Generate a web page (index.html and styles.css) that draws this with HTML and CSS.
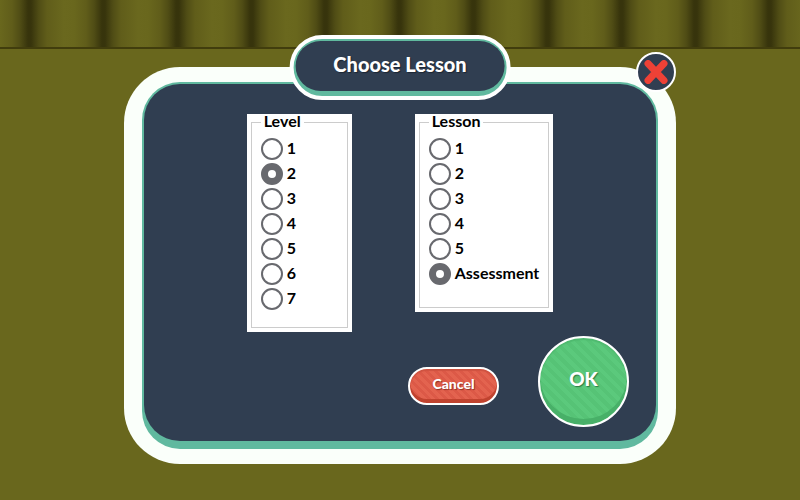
FILE: index.html
```html
<!DOCTYPE html>
<html lang="en">
<head>
<meta charset="utf-8">
<title>Choose Lesson</title>
<link rel="stylesheet" href="styles.css">
</head>
<body>
<div class="curtain"></div>
<main class="dialog" role="dialog" aria-labelledby="dialog-title">
  <h1 class="title" id="dialog-title"><span class="title-face">Choose Lesson</span></h1>
  <button class="close" type="button" aria-label="Close">
    <svg viewBox="0 0 24 24" width="24" height="24"><path d="M4 3.5 20 20.5M20 3.5 4 20.5" fill="none" stroke="#ee4136" stroke-width="7" stroke-linecap="round"/></svg>
  </button>
  <div class="rim">
    <form class="content">
      <div class="choices">
        <div class="card">
          <fieldset class="group level">
            <legend>Level</legend>
            <label><input type="radio" name="level">1</label>
            <label><input type="radio" name="level" checked>2</label>
            <label><input type="radio" name="level">3</label>
            <label><input type="radio" name="level">4</label>
            <label><input type="radio" name="level">5</label>
            <label><input type="radio" name="level">6</label>
            <label><input type="radio" name="level">7</label>
          </fieldset>
        </div>
        <div class="card">
          <fieldset class="group lesson">
            <legend>Lesson</legend>
            <label><input type="radio" name="lesson">1</label>
            <label><input type="radio" name="lesson">2</label>
            <label><input type="radio" name="lesson">3</label>
            <label><input type="radio" name="lesson">4</label>
            <label><input type="radio" name="lesson">5</label>
            <label><input type="radio" name="lesson" checked>Assessment</label>
          </fieldset>
        </div>
      </div>
      <div class="actions">
        <button class="cancel" type="button">Cancel</button>
        <button class="ok" type="button">OK</button>
      </div>
    </form>
  </div>
</main>
</body>
</html>
```
FILE: styles.css
```css
* {
  box-sizing: border-box;
}

body {
  margin: 0;
  min-height: 100vh;
  background: #69671d;
  font-family: Lato, "Open Sans", sans-serif;
}

.curtain {
  height: 49px;
  border-bottom: 2px solid #413d0d;
  background: repeating-linear-gradient(90deg, #69671d 0, #605d1a 12px, #504d15 20px, #37340c 28px, #37340c 31px, #504d15 39px, #605d1a 47px, #6a681e 64px, #69671d 74px);
}

.dialog {
  position: relative;
  width: 69%;
  min-width: 480px;
  margin: 18px auto 36px;
  padding: 15px 18px;
  border-radius: 56px;
  background: #fafffa;
}

.rim {
  padding: 2px 2px 8px;
  border-radius: 38px;
  background: #60b99f;
}

.content {
  padding: 30px 27px 14px;
  border-radius: 36px;
  background: #303e51;
}

.title {
  position: absolute;
  top: -32px;
  left: 50%;
  width: 40%;
  margin: 0;
  padding: 2px 2px 5px;
  border: 4px solid #fff;
  border-radius: 33px;
  background: #60b99f;
  transform: translateX(-50%);
}

.title-face {
  display: block;
  padding-bottom: 3px;
  border-radius: 26px;
  background: #303e51;
  color: #fff;
  font-size: 20px;
  font-weight: 900;
  line-height: 47px;
  text-align: center;
  text-shadow: 1px 1px 1px #1c2633;
}

.close {
  position: absolute;
  top: -15px;
  right: 0;
  display: grid;
  place-items: center;
  width: 40px;
  height: 40px;
  padding: 0;
  border: 2px solid #fff;
  border-radius: 50%;
  background: #303e51;
}

.choices {
  display: flex;
  justify-content: center;
  align-items: flex-start;
  gap: 63px;
}

.card {
  padding: 0 4px 4px;
  background: #fff;
}

.group {
  margin: 0;
  padding: 8px 9px 14px;
  border: 1px solid #ccc;
  color: #000;
  font-size: 16px;
  font-weight: 700;
}

.level {
  min-width: 97px;
}

.lesson {
  min-width: 130px;
  padding-bottom: 19px;
}

.group legend {
  padding: 0 3px 2px;
  line-height: 14px;
}

.group label {
  display: flex;
  align-items: flex-start;
  gap: 4px;
  height: 25px;
  line-height: 20px;
}

.group input {
  flex: none;
  appearance: none;
  width: 22px;
  height: 22px;
  margin: 0;
  border: 2px solid #68696e;
  border-radius: 50%;
  background: #fff;
}

.group input:checked {
  border-width: 7px;
}

.actions {
  display: flex;
  justify-content: flex-end;
  align-items: center;
  gap: 39px;
  margin-top: 4px;
}

.actions button {
  border: 2px solid #fff;
  color: #fff;
  font-family: inherit;
  font-weight: 900;
}

.cancel {
  width: 91px;
  height: 38px;
  margin-top: 8px;
  padding: 0 0 5px;
  border-radius: 19px;
  background: repeating-linear-gradient(45deg, #e3634f 0 3px, #dc5947 3px 6px);
  box-shadow: inset 0 -4px #c0432f, inset 0 2px 1px #cf5341;
  font-size: 14px;
  text-shadow: 1px 1px 1px #8e3327;
}

.ok {
  width: 91px;
  height: 91px;
  padding: 0 0 6px;
  border-radius: 50%;
  background: repeating-linear-gradient(45deg, #5bc97c 0 4px, #56c376 4px 8px);
  box-shadow: inset 0 -6px #48b068, inset 0 2px 1px #4fb96f;
  font-size: 19px;
  text-shadow: 1px 1px 1px #2f7a45;
}
```
